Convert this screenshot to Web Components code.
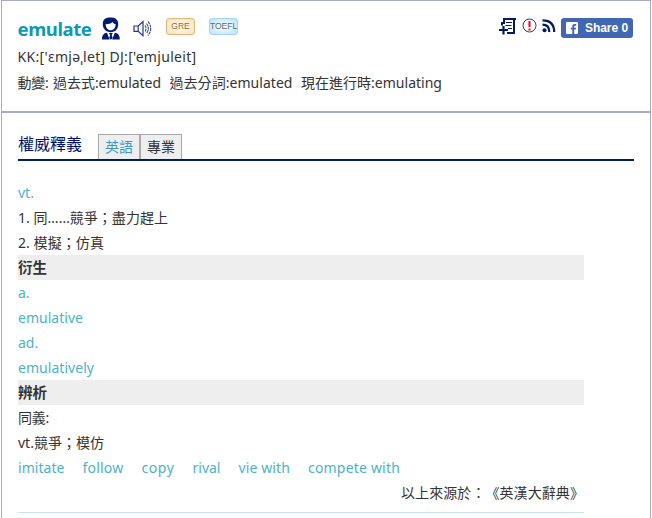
<!DOCTYPE html>
<html lang="zh-Hant">
<head>
<meta charset="utf-8">
<title>emulate</title>
<style>
body{margin:0;background:#fff;color:#333;font:14px/25px "Noto Sans","Noto Sans CJK TC",sans-serif;text-spacing-trim:space-all;overflow:hidden}
</style>
</head>
<body>
<dict-page></dict-page>
<script>
// A run of text whose tracking is set so that it fills the width in "w".
class TextRun extends HTMLElement{
  constructor(){super();this.attachShadow({mode:'open'}).innerHTML='<style>:host{display:inline-block;white-space:pre;flex:none}span{display:inline-block}</style><span><slot></slot></span>'}
  connectedCallback(){
    const w=+this.getAttribute('w');if(!w)return;
    const s=this.shadowRoot.querySelector('span');
    const n=[...this.textContent].length;
    s.style.letterSpacing=(w-s.getBoundingClientRect().width)/n+'px';
    this.style.width=w+'px';
  }
}
class ExamBadge extends HTMLElement{
  constructor(){super();this.attachShadow({mode:'open'}).innerHTML=`<style>
  :host{display:flex;box-sizing:border-box;width:29px;height:17px;border:1px solid #e3b778;border-radius:3px;align-items:center;justify-content:center;background:radial-gradient(ellipse,#fff8ec 20%,#fbdfb5 100%);color:#97683a;font:8.5px/15px "Liberation Sans",sans-serif;white-space:nowrap}
  :host([kind=toefl]){border-color:#a5d5f0;background:radial-gradient(ellipse,#f1faff 20%,#b9e2f8 100%);color:#53677a}
  </style><slot></slot>`}
}
class UiIcon extends HTMLElement{
  constructor(){super();this.attachShadow({mode:'open'})}
  connectedCallback(){
    const art={
    user:['20','23','<path d="M1.800 7C1.800 2 5 .6 9.500.6S17.200 2.500 17.200 7c0 5-3 8.200-7.500 8.200S1.800 12 1.800 7z" fill="#001a72"/><path d="M4.600 7.200c3.200-.1 5.300-.8 7-2.300.6 1.400 1.700 2 3.100 2.300-.2 3.800-2.100 6-5 6s-4.900-2.200-5.100-6z" fill="#fff"/><path d="M1 22.500c0-4 1.600-6.400 5-6.700l2.600 6.700zM18.800 22.500c0-4-1.600-6.400-5-6.700l-2.600 6.700z" fill="#001a72"/><path d="M7.800 16h4l-1.100 2 1 3-1.800 1.700L8.200 21l.9-3z" fill="#001a72"/>'],
    speaker:['20','17','<path d="M1 6h4.200L10 1.700v14L5.200 11.400H1zM5.200 6v5.400" fill="none" stroke="#233985" stroke-width="1.200"/><path d="M12 5.500q2.200 3 0 6M13.500 3.500q3.800 5 0 10M15 1.500q5.500 7 0 14" fill="none" stroke="#33458e" stroke-width="1.100" stroke-dasharray="3 .6"/>'],
    note:['18','17','<path d="M3 7.500V5H5V1H17M15 1V15H8" fill="none" stroke="#001a66" stroke-width="2"/><path d="M7 4.500h6M6.500 7.500h6M9 10.500h4" stroke="#001a66" stroke-width="1.200"/><path d="M0 12h9M4.500 8v8.500" stroke="#001a66" stroke-width="2.200"/>'],
    alert:['15','15','<circle cx="7.500" cy="7.500" r="6.500" fill="#fff" stroke="#283a78"/><path d="M7.500 3v6M7.500 10.500v2" stroke="#f00" stroke-width="2"/>'],
    feed:['14','14','<circle cx="2.500" cy="11.300" r="2" fill="#001a66"/><path d="M.5 5.700q6.800 0 6.800 7.300M.5 1.300q11.700 0 11.700 11.700" fill="none" stroke="#001a66" stroke-width="2.200"/>'],
    fb:['12','12','<rect width="12" height="12" rx="1" fill="#fff"/><path d="M8.200 12V7.500h1.600l.3-1.800H8.200V4.600c0-.6.3-.9.9-.9h1.100V2.100H8.600c-1.500 0-2.300.8-2.300 2.200v1.400H4.800v1.800h1.500V12z" fill="#4267b2"/>']};
    const [w,h,p]=art[this.getAttribute('name')];
    this.shadowRoot.innerHTML=`<style>:host{display:block;flex:none}svg{display:block}</style><svg width="${w}" height="${h}" viewBox="0 0 ${w} ${h}">${p}</svg>`;
  }
}
class ShareButton extends HTMLElement{
  constructor(){super();this.attachShadow({mode:'open'}).innerHTML=`<style>
  :host{box-sizing:border-box;display:flex;align-items:center;width:72px;height:20px;border-radius:3px;background:#4267b2;color:#fff;padding-left:5px;font:bold 12px/20px "Liberation Sans",sans-serif}
  text-run{margin:-1px 0 0 7px}</style><ui-icon name="fb"></ui-icon><text-run w="43">Share 0</text-run>`}
}
class WordHeader extends HTMLElement{
  constructor(){super();this.attachShadow({mode:'open'}).innerHTML=`<style>
  :host{box-sizing:border-box;display:block;height:112px;border:1px solid #a9abc5;padding:15px 17px 0 15.500px}
  .top{display:flex;height:28px}
  .word{color:#0b9ab8;font-weight:bold;font-size:18.500px;line-height:26px}
  .user{margin:1px 0 0 9.500px}.speaker{margin:4px 0 0 11.500px}
  exam-badge{margin:2px 0 0 13.500px}exam-badge+exam-badge{margin-left:14px}
  .tools{margin-left:auto;display:flex}
  .tools>*{margin-top:2px}.alert{margin:2px 0 0 5px}.feed{margin:3px 0 0 4.500px}share-button{margin:1px 0 0 5.500px}
  .line{display:flex;height:26px;line-height:26px}
  .line text-run+text-run{margin-left:8.500px}.line .first{margin-left:4.500px!important}
  </style>
  <div class="top"><text-run class="word" w="74">emulate</text-run><ui-icon class="user" name="user"></ui-icon><ui-icon class="speaker" name="speaker"></ui-icon><exam-badge>GRE</exam-badge><exam-badge kind="toefl">TOEFL</exam-badge>
  <div class="tools"><ui-icon name="note"></ui-icon><ui-icon class="alert" name="alert"></ui-icon><ui-icon class="feed" name="feed"></ui-icon><share-button></share-button></div></div>
  <div class="line"><text-run w="179">KK:['ɛmjəˌlet] DJ:['emjuleit]</text-run></div>
  <div class="line"><text-run w="31">動變:</text-run><text-run class="first" w="108">過去式:emulated</text-run><text-run w="123">過去分詞:emulated</text-run><text-run w="141">現在進行時:emulating</text-run></div>`}
}
class DictTabs extends HTMLElement{
  constructor(){super();this.attachShadow({mode:'open'}).innerHTML=`<style>
  :host{box-sizing:border-box;display:flex;height:27px;border-bottom:2px solid #001a66}
  .title{width:80px;font-size:16px;line-height:21px;color:#000e66}
  .tab{box-sizing:border-box;width:42px;height:25px;border:1px solid #aaa;border-bottom:0;background:#eee;text-align:center;line-height:24px}
  .on{color:#3d98d0}
  </style><div class="title">權威釋義</div><div class="tab on">英語</div><div class="tab">專業</div>`}
}
class EntryRow extends HTMLElement{
  constructor(){super();this.attachShadow({mode:'open'}).innerHTML=`<style>
  :host{display:flex;height:25px;line-height:26px;white-space:pre}
  :host([kind=link]){color:#4bb3c6;gap:18px}
  :host([kind=head]){background:#eee;font-weight:bold;font-size:14.500px;line-height:25px}
  :host([kind=source]){justify-content:flex-end}
  </style><slot></slot>`}
}
class DictPage extends HTMLElement{
  constructor(){super();this.attachShadow({mode:'open'}).innerHTML=`<style>
  :host{display:block;width:650px;margin-left:1px;height:518px;overflow:hidden}
  main{box-sizing:border-box;height:420px;border:1px solid #a9abc5;padding:21px 16px 0}
  section{width:566px;height:332px;margin-top:19px;border-bottom:1px solid #c4e4f4}
  </style><word-header></word-header><main><dict-tabs></dict-tabs><section>
  <entry-row kind="link">vt.</entry-row>
  <entry-row><text-run w="150">1. 同……競爭；盡力趕上</text-run></entry-row>
  <entry-row><text-run w="86">2. 模擬；仿真</text-run></entry-row>
  <entry-row kind="head">衍生</entry-row>
  <entry-row kind="link">a.</entry-row>
  <entry-row kind="link"><text-run w="65">emulative</text-run></entry-row>
  <entry-row kind="link">ad.</entry-row>
  <entry-row kind="link"><text-run w="76">emulatively</text-run></entry-row>
  <entry-row kind="head">辨析</entry-row>
  <entry-row><text-run w="31">同義:</text-run></entry-row>
  <entry-row><text-run w="86">vt.競爭；模仿</text-run></entry-row>
  <entry-row kind="link"><text-run w="46.500">imitate</text-run><text-run w="41">follow</text-run><text-run w="33">copy</text-run><text-run w="28">rival</text-run><text-run w="51.500">vie with</text-run><text-run w="92">compete with</text-run></entry-row>
  <entry-row kind="source"><text-run w="183">以上來源於：《英漢大辭典》</text-run></entry-row>
  </section></main>`}
}
customElements.define('dict-page',DictPage);
customElements.define('word-header',WordHeader);
customElements.define('dict-tabs',DictTabs);
customElements.define('entry-row',EntryRow);
customElements.define('exam-badge',ExamBadge);
customElements.define('ui-icon',UiIcon);
customElements.define('share-button',ShareButton);
customElements.define('text-run',TextRun);
</script>
</body>
</html>
